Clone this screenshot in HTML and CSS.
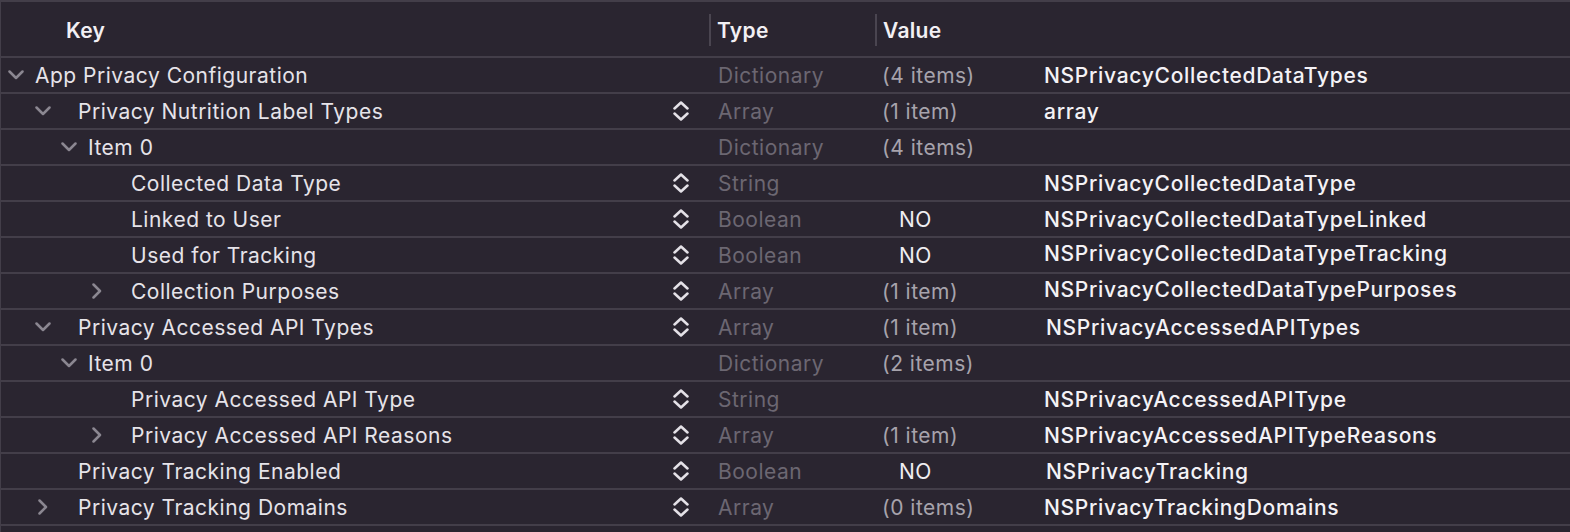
FILE: index.html
```html
<!DOCTYPE html>
<html>
<head>
<meta charset="utf-8">
<link rel="stylesheet" href="styles.css">
</head>
<body>
<div class="table">
  <div class="header">
    <div class="hcell hkey">Key</div>
    <div class="hcell hsep">Type</div>
    <div class="hcell hsep">Value</div>
    <div class="hcell"></div>
  </div>

  <div class="row">
    <div class="key l0"><span class="tog"><svg width="16" height="10" viewBox="0 0 16 10"><path d="M1.5 1.5 L8 8 L14.5 1.5"/></svg></span><span class="label">App Privacy Configuration</span></div>
    <div class="type">Dictionary</div>
    <div class="value">(4 items)</div>
    <div class="note">NSPrivacyCollectedDataTypes</div>
  </div>

  <div class="row">
    <div class="key l1 ed"><span class="tog"><svg width="16" height="10" viewBox="0 0 16 10"><path d="M1.5 1.5 L8 8 L14.5 1.5"/></svg></span><span class="label">Privacy Nutrition Label Types</span><span class="step"><svg width="16" height="22" viewBox="0 0 16 22"><path d="M1.5 8.5 L8 2.5 L14.5 8.5"/><path d="M1.5 13.5 L8 19.5 L14.5 13.5"/></svg></span></div>
    <div class="type">Array</div>
    <div class="value">(1 item)</div>
    <div class="note">array</div>
  </div>

  <div class="row">
    <div class="key l2"><span class="tog"><svg width="16" height="10" viewBox="0 0 16 10"><path d="M1.5 1.5 L8 8 L14.5 1.5"/></svg></span><span class="label">Item 0</span></div>
    <div class="type">Dictionary</div>
    <div class="value">(4 items)</div>
    <div class="note"></div>
  </div>

  <div class="row">
    <div class="key l3 ed"><span class="tog"></span><span class="label">Collected Data Type</span><span class="step"><svg width="16" height="22" viewBox="0 0 16 22"><path d="M1.5 8.5 L8 2.5 L14.5 8.5"/><path d="M1.5 13.5 L8 19.5 L14.5 13.5"/></svg></span></div>
    <div class="type">String</div>
    <div class="value"></div>
    <div class="note">NSPrivacyCollectedDataType</div>
  </div>

  <div class="row">
    <div class="key l3 ed"><span class="tog"></span><span class="label">Linked to User</span><span class="step"><svg width="16" height="22" viewBox="0 0 16 22"><path d="M1.5 8.5 L8 2.5 L14.5 8.5"/><path d="M1.5 13.5 L8 19.5 L14.5 13.5"/></svg></span></div>
    <div class="type">Boolean</div>
    <div class="value bool">NO</div>
    <div class="note">NSPrivacyCollectedDataTypeLinked</div>
  </div>

  <div class="row">
    <div class="key l3 ed"><span class="tog"></span><span class="label">Used for Tracking</span><span class="step"><svg width="16" height="22" viewBox="0 0 16 22"><path d="M1.5 8.5 L8 2.5 L14.5 8.5"/><path d="M1.5 13.5 L8 19.5 L14.5 13.5"/></svg></span></div>
    <div class="type">Boolean</div>
    <div class="value bool">NO</div>
    <div class="note up">NSPrivacyCollectedDataTypeTracking</div>
  </div>

  <div class="row">
    <div class="key l3 ed"><span class="tog"><svg width="10" height="16" viewBox="0 0 10 16"><path d="M1.5 1.5 L8 8 L1.5 14.5"/></svg></span><span class="label">Collection Purposes</span><span class="step"><svg width="16" height="22" viewBox="0 0 16 22"><path d="M1.5 8.5 L8 2.5 L14.5 8.5"/><path d="M1.5 13.5 L8 19.5 L14.5 13.5"/></svg></span></div>
    <div class="type">Array</div>
    <div class="value">(1 item)</div>
    <div class="note up">NSPrivacyCollectedDataTypePurposes</div>
  </div>

  <div class="row">
    <div class="key l1 ed"><span class="tog"><svg width="16" height="10" viewBox="0 0 16 10"><path d="M1.5 1.5 L8 8 L14.5 1.5"/></svg></span><span class="label">Privacy Accessed API Types</span><span class="step"><svg width="16" height="22" viewBox="0 0 16 22"><path d="M1.5 8.5 L8 2.5 L14.5 8.5"/><path d="M1.5 13.5 L8 19.5 L14.5 13.5"/></svg></span></div>
    <div class="type">Array</div>
    <div class="value">(1 item)</div>
    <div class="note sh">NSPrivacyAccessedAPITypes</div>
  </div>

  <div class="row">
    <div class="key l2"><span class="tog"><svg width="16" height="10" viewBox="0 0 16 10"><path d="M1.5 1.5 L8 8 L14.5 1.5"/></svg></span><span class="label">Item 0</span></div>
    <div class="type">Dictionary</div>
    <div class="value">(2 items)</div>
    <div class="note"></div>
  </div>

  <div class="row">
    <div class="key l3 ed"><span class="tog"></span><span class="label">Privacy Accessed API Type</span><span class="step"><svg width="16" height="22" viewBox="0 0 16 22"><path d="M1.5 8.5 L8 2.5 L14.5 8.5"/><path d="M1.5 13.5 L8 19.5 L14.5 13.5"/></svg></span></div>
    <div class="type">String</div>
    <div class="value"></div>
    <div class="note">NSPrivacyAccessedAPIType</div>
  </div>

  <div class="row">
    <div class="key l3 ed"><span class="tog"><svg width="10" height="16" viewBox="0 0 10 16"><path d="M1.5 1.5 L8 8 L1.5 14.5"/></svg></span><span class="label">Privacy Accessed API Reasons</span><span class="step"><svg width="16" height="22" viewBox="0 0 16 22"><path d="M1.5 8.5 L8 2.5 L14.5 8.5"/><path d="M1.5 13.5 L8 19.5 L14.5 13.5"/></svg></span></div>
    <div class="type">Array</div>
    <div class="value">(1 item)</div>
    <div class="note">NSPrivacyAccessedAPITypeReasons</div>
  </div>

  <div class="row">
    <div class="key l1 ed"><span class="tog"></span><span class="label">Privacy Tracking Enabled</span><span class="step"><svg width="16" height="22" viewBox="0 0 16 22"><path d="M1.5 8.5 L8 2.5 L14.5 8.5"/><path d="M1.5 13.5 L8 19.5 L14.5 13.5"/></svg></span></div>
    <div class="type">Boolean</div>
    <div class="value bool">NO</div>
    <div class="note sh">NSPrivacyTracking</div>
  </div>

  <div class="row">
    <div class="key l1 ed"><span class="tog"><svg width="10" height="16" viewBox="0 0 10 16"><path d="M1.5 1.5 L8 8 L1.5 14.5"/></svg></span><span class="label">Privacy Tracking Domains</span><span class="step"><svg width="16" height="22" viewBox="0 0 16 22"><path d="M1.5 8.5 L8 2.5 L14.5 8.5"/><path d="M1.5 13.5 L8 19.5 L14.5 13.5"/></svg></span></div>
    <div class="type">Array</div>
    <div class="value">(0 items)</div>
    <div class="note">NSPrivacyTrackingDomains</div>
  </div>
</div>
</body>
</html>
```

FILE: styles.css
```css
html, body {
  margin: 0;
  padding: 0;
  background: #2a2530;
}
body {
  width: 1570px;
  height: 532px;
  overflow: hidden;
  font-family: Inter, "Noto Sans", sans-serif;
  font-size: 21px;
  letter-spacing: 0.5px;
  color: #e6e3e9;
}
.table {
  border-top: 2px solid #433e49;
  border-left: 1px solid #433e49;
  height: 530px;
}
.header, .row {
  display: grid;
  grid-template-columns: 708px 166px 168px 1fr;
  border-bottom: 2px solid #433e49;
}
.header {
  height: 54px;
}
.hcell {
  display: flex;
  align-items: center;
  font-weight: 600;
  color: #f2f0f4;
  padding-left: 7px;
  padding-top: 1px;
  letter-spacing: 0.3px;
}
.hkey {
  padding-left: 65px;
  padding-top: 2px;
}
.hsep {
  border-left: 2px solid #4a4550;
  margin: 12px 0 10px;
  padding-left: 6px;
}
.row {
  height: 34px;
}
.key {
  display: flex;
  align-items: center;
  padding-right: 20px;
}
.l0 { padding-left: 5px; }
.l1 { padding-left: 32px; }
.l2 { padding-left: 58px; }
.l3 { padding-left: 86px; }
.tog {
  width: 20px;
  height: 20px;
  flex: none;
  display: flex;
  align-items: center;
  justify-content: center;
}
.tog svg path {
  fill: none;
  stroke: #8b8791;
  stroke-width: 2.5;
  stroke-linecap: round;
  stroke-linejoin: round;
}
.label {
  margin-left: 9px;
  white-space: nowrap;
}
.ed .label {
  margin-left: 25px;
}
.l3.ed .label {
  margin-left: 24px;
}
.step {
  margin-left: auto;
  width: 16px;
  height: 22px;
  display: flex;
}
.step svg path {
  fill: none;
  stroke: #e4e1e7;
  stroke-width: 2.5;
  stroke-linecap: round;
  stroke-linejoin: round;
}
.type {
  display: flex;
  align-items: center;
  padding-left: 9px;
  color: #6c6772;
}
.value {
  display: flex;
  align-items: center;
  padding-left: 7px;
  color: #a7a3ac;
}
.value.bool {
  padding-left: 24px;
  color: #f0eef2;
}
.note {
  display: flex;
  align-items: center;
  padding-left: 1px;
  font-weight: 500;
  letter-spacing: 0.7px;
  color: #f4f2f6;
  white-space: nowrap;
}
.note.up {
  padding-bottom: 4px;
}
.note.sh {
  padding-left: 3px;
}
```
